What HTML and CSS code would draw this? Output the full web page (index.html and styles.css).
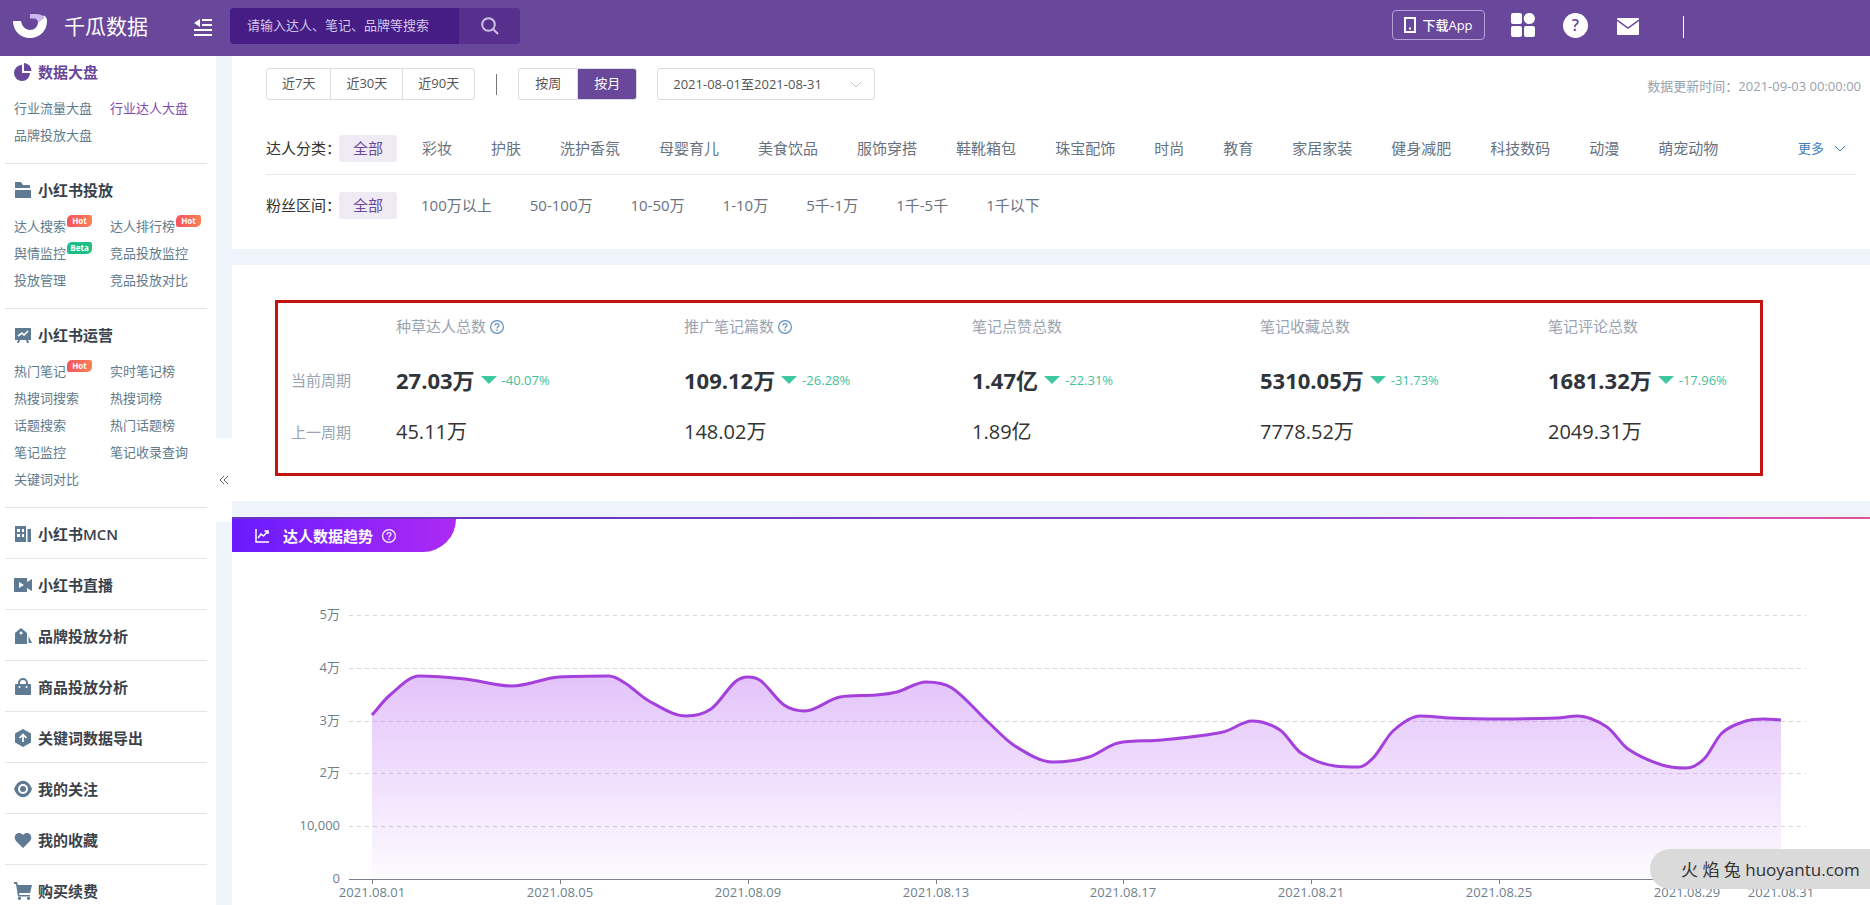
FILE: index.html
```html
<!DOCTYPE html>
<html lang="zh-CN">
<head>
<meta charset="utf-8">
<title>千瓜数据</title>
<meta name="viewport" content="width=device-width, initial-scale=1">
<link rel="stylesheet" href="styles.css">
</head>
<body>
<header class="topbar">
  <svg class="logo" viewBox="0 0 34 24" aria-hidden="true"><path fill="#fff" d="M0 7h8c1 5.500 4.500 9 9 9 4.600 0 8-3.500 8-8 0-1-.2-2-.6-3l6.600-3.500C33 2.500 34 4.500 34 7c0 10-7.500 17-17 17S0 17 0 7z"/><path fill="#cbb8ea" d="M17 0h6c4 0 7 1.200 9 3.500L25 9c0-3-1.500-4.500-4-4.500h-4z"/></svg>
  <span class="brand">千瓜数据</span>
  <button class="menu-btn" aria-label="收起菜单"><svg viewBox="0 0 18 17"><path fill="#fff" d="M6 0v8L0 4zM8 0h10v2H8zM8 5h10v2H8zM0 10h18v2H0zM0 15h18v2H0z"/></svg></button>
  <form class="search">
    <input class="search-input" type="text" aria-label="搜索" placeholder="请输入达人、笔记、品牌等搜索">
    <button class="search-btn" type="button" aria-label="搜索"><svg viewBox="0 0 18 18" fill="none" stroke="#cfc0e6" stroke-width="2"><circle cx="7.500" cy="7.500" r="6.300"/><path d="M12 12l5 5"/></svg></button>
  </form>
  <nav class="top-actions">
    <button class="download"><svg viewBox="0 0 12 16"><path fill="#fff" fill-rule="evenodd" d="M0 0h12v16H0zM2 2v12h8V2zM5 10.500h2v2H5z"/></svg>下载App</button>
    <a class="top-icon icon-grid" href="#" aria-label="应用"><svg viewBox="0 0 24 24" fill="#fff"><rect width="11" height="11" rx="2"/><circle cx="18.300" cy="5.500" r="5.600"/><rect y="13" width="11" height="11" rx="2"/><rect x="13" y="13" width="11" height="11" rx="2"/></svg></a>
    <a class="top-icon icon-help" href="#" aria-label="帮助">?</a>
    <a class="top-icon icon-mail" href="#" aria-label="消息"><svg viewBox="0 0 22 17"><rect width="22" height="17" rx="1" fill="#fff"/><path d="M0 2l11 8 11-8" fill="none" stroke="#69479b" stroke-width="1.500"/></svg></a>
    <span class="top-divider"></span>
  </nav>
</header>
<div class="page">
  <aside class="sidebar">
    <section class="group first">
      <h2 class="group-title active"><svg viewBox="0 0 18 18"><path fill="#69479b" d="M8 2v8h8a8 8 0 1 1-8-8z"/><path fill="#69479b" d="M10 0a8 8 0 0 1 7.500 8H10z"/></svg>数据大盘</h2>
      <div class="links"><a href="#">行业流量大盘</a><a class="current" href="#">行业达人大盘</a><a href="#">品牌投放大盘</a></div>
    </section>
    <section class="group">
      <h2 class="group-title"><svg viewBox="0 0 18 18"><path d="M1 1h6l2 3h7v3H1zM1 9h16v8H1z"/></svg>小红书投放</h2>
      <div class="links"><a href="#">达人搜索<sup class="badge">Hot</sup></a><a href="#">达人排行榜<sup class="badge">Hot</sup></a><a href="#">舆情监控<sup class="badge beta">Beta</sup></a><a href="#">竞品投放监控</a><a href="#">投放管理</a><a href="#">竞品投放对比</a></div>
    </section>
    <section class="group">
      <h2 class="group-title"><svg viewBox="0 0 18 18"><path d="M1 2h16v12h-3l1 3h-2l-1-3H6l-1 3H3l1-3H1z"/><path d="M4 10l4-3 2 2 4-4" fill="none" stroke="#fff" stroke-width="1.600"/></svg>小红书运营</h2>
      <div class="links"><a href="#">热门笔记<sup class="badge">Hot</sup></a><a href="#">实时笔记榜</a><a href="#">热搜词搜索</a><a href="#">热搜词榜</a><a href="#">话题搜索</a><a href="#">热门话题榜</a><a href="#">笔记监控</a><a href="#">笔记收录查询</a><a href="#">关键词对比</a></div>
    </section>
    <section class="group"><h2 class="group-title"><svg viewBox="0 0 18 18"><path fill-rule="evenodd" d="M1 1h11v16H1zM3 4v3h3V4zM8 4v3h2V4zM3 9v3h3V9zM8 9v3h2V9zM13.500 4H17v13h-3.500z"/></svg>小红书MCN</h2></section>
    <section class="group"><h2 class="group-title"><svg viewBox="0 0 18 18"><path fill-rule="evenodd" d="M0 2h13v4l5-3v12l-5-3v4H0zM5 6v6l5-3z"/></svg>小红书直播</h2></section>
    <section class="group"><h2 class="group-title"><svg viewBox="0 0 18 18"><path fill-rule="evenodd" d="M7 1l6 5v11H1V6zM7 4.500a1.500 1.500 0 1 0 .1 0zM14.500 9L18 16h-3.500z"/></svg>品牌投放分析</h2></section>
    <section class="group"><h2 class="group-title"><svg viewBox="0 0 18 18"><path d="M5 7V5a4 4 0 0 1 8 0v2" fill="none" stroke="#5f7a93" stroke-width="2"/><rect x="1" y="6" width="16" height="11" rx="1"/><circle cx="5.500" cy="9" r="1" fill="#fff"/><circle cx="12.500" cy="9" r="1" fill="#fff"/></svg>商品投放分析</h2></section>
    <section class="group"><h2 class="group-title"><svg viewBox="0 0 18 18"><path d="M9 0l8 4.500v9L9 18l-8-4.500v-9z"/><path d="M9 13V6M5.500 9L9 5.500 12.500 9" fill="none" stroke="#fff" stroke-width="1.700"/></svg>关键词数据导出</h2></section>
    <section class="group"><h2 class="group-title"><svg viewBox="0 0 18 18"><path d="M0 9c4-11 14-11 18 0-4 11-14 11-18 0z"/><circle cx="9" cy="9" r="4" fill="none" stroke="#fff" stroke-width="2"/></svg>我的关注</h2></section>
    <section class="group"><h2 class="group-title"><svg viewBox="0 0 18 18"><path d="M9 17L2 10C-2 5 4-1 9 4c5-5 11 1 7 6z"/></svg>我的收藏</h2></section>
    <section class="group"><h2 class="group-title"><svg viewBox="0 0 18 18"><path d="M0 0h3l1 3h14l-2 8H5l.5 2H16v1.500H4L2 2H0z"/><circle cx="5.500" cy="16.300" r="1.600"/><circle cx="14.500" cy="16.300" r="1.600"/></svg>购买续费</h2></section>
  </aside>
  <div class="gutter"><button class="collapse" aria-label="收起侧栏"><svg viewBox="0 0 10 10"><path d="M5 1L1 5l4 4M9 1L5 5l4 4" fill="none" stroke="#666"/></svg></button></div>
  <main class="content">
    <section class="panel filters">
      <div class="toolbar">
        <div class="btn-group"><button>近7天</button><button>近30天</button><button>近90天</button></div>
        <span class="separator"></span>
        <div class="btn-group wide"><button>按周</button><button class="selected">按月</button></div>
        <div class="select-wrap"><select class="period" aria-label="日期范围"><option>2021-08-01至2021-08-31</option></select><svg class="chevron" viewBox="0 0 12 7"><path d="M1 1l5 5 5-5" fill="none" stroke="#c0c4cc"/></svg></div>
        <span class="updated">数据更新时间：2021-09-03 00:00:00</span>
      </div>
      <div class="filter-row lined">
        <span class="filter-label">达人分类：</span>
        <a class="on" href="#">全部</a><a href="#">彩妆</a><a href="#">护肤</a><a href="#">洗护香氛</a><a href="#">母婴育儿</a><a href="#">美食饮品</a><a href="#">服饰穿搭</a><a href="#">鞋靴箱包</a><a href="#">珠宝配饰</a><a href="#">时尚</a><a href="#">教育</a><a href="#">家居家装</a><a href="#">健身减肥</a><a href="#">科技数码</a><a href="#">动漫</a><a href="#">萌宠动物</a>
        <button class="more">更多<svg class="chevron" viewBox="0 0 12 7"><path d="M1 1l5 5 5-5" fill="none" stroke="#3c80bd"/></svg></button>
      </div>
      <div class="filter-row fans">
        <span class="filter-label">粉丝区间：</span>
        <a class="on" href="#">全部</a><a href="#">100万以上</a><a href="#">50-100万</a><a href="#">10-50万</a><a href="#">1-10万</a><a href="#">5千-1万</a><a href="#">1千-5千</a><a href="#">1千以下</a>
      </div>
    </section>
    <section class="panel stats">
      <table class="stats-table">
        <thead><tr><td></td>
          <th scope="col">种草达人总数<svg class="help" viewBox="0 0 14 14"><circle cx="7" cy="7" r="6.400"/><path d="M5 5.500C5 3 9 3 9 5.300 9 6.800 7 6.700 7 8.500M7 9.500V11"/></svg></th>
          <th scope="col">推广笔记篇数<svg class="help" viewBox="0 0 14 14"><circle cx="7" cy="7" r="6.400"/><path d="M5 5.500C5 3 9 3 9 5.300 9 6.800 7 6.700 7 8.500M7 9.500V11"/></svg></th>
          <th scope="col">笔记点赞总数</th><th scope="col">笔记收藏总数</th><th scope="col">笔记评论总数</th></tr></thead>
        <tbody>
          <tr class="now"><th scope="row">当前周期</th>
            <td><b>27.03万</b><span class="drop">-40.07%</span></td>
            <td><b>109.12万</b><span class="drop">-26.28%</span></td>
            <td><b>1.47亿</b><span class="drop">-22.31%</span></td>
            <td><b>5310.05万</b><span class="drop">-31.73%</span></td>
            <td><b>1681.32万</b><span class="drop">-17.96%</span></td></tr>
          <tr class="before"><th scope="row">上一周期</th><td>45.11万</td><td>148.02万</td><td>1.89亿</td><td>7778.52万</td><td>2049.31万</td></tr>
        </tbody>
      </table>
      <div class="highlight"></div>
    </section>
    <section class="panel trend">
      <div class="trend-line"></div>
      <h3 class="trend-title"><svg class="trend-icon" viewBox="0 0 14 14"><path d="M1 0v13h13M3 9l3-4 2.500 2L13 2M9.500 2H13v3" fill="none" stroke="#fff" stroke-width="1.500"/></svg>达人数据趋势<svg class="help light" viewBox="0 0 14 14"><circle cx="7" cy="7" r="6.400"/><path d="M5 5.500C5 3 9 3 9 5.300 9 6.800 7 6.700 7 8.500M7 9.500V11"/></svg></h3>
      <svg class="chart" id="chart" viewBox="232 553 1638 360" role="img" aria-label="达人数据趋势">
        <defs><linearGradient id="fill" x1="0" y1="0" x2="0" y2="1"><stop offset="0" stop-color="#a845f0" stop-opacity=".32"/><stop offset="1" stop-color="#a845f0" stop-opacity=".02"/></linearGradient></defs>
      </svg>
    </section>
  </main>
</div>
<div class="watermark">火 焰 兔 huoyantu.com</div>
<script src="chart.js"></script>
</body>
</html>
```
FILE: styles.css
```css
* { box-sizing: border-box; }
body {
  margin: 0;
  height: 100vh;
  overflow: hidden;
  display: flex;
  flex-direction: column;
  font: 13px/20px "Open Sans", "Noto Sans CJK SC", sans-serif;
  color: #333;
  background: #eef4fa;
}
a { color: inherit; text-decoration: none; }
button, input, select { font: inherit; color: inherit; }
button { border: 0; background: none; padding: 0; cursor: pointer; }
svg { display: block; flex: none; }

.topbar {
  flex: none;
  height: 56px;
  background: #69479b;
  color: #fff;
  display: flex;
  align-items: flex-start;
  padding: 8px 0 0 13px;
}
.logo { width: 34px; height: 24px; margin-top: 6px; }
.brand { font-size: 21px; line-height: 36px; margin-left: 17px; white-space: nowrap; }
.menu-btn { margin: 11px 0 0 46px; }
.menu-btn svg { width: 18px; height: 17px; }
.search { display: flex; width: 290px; height: 36px; margin-left: 18px; border-radius: 4px; overflow: hidden; background: #56308c; }
.search-input { width: 229px; border: 0; padding: 0 17px 2px; background: #461d85; color: #fff; outline: 0; }
.search-input::placeholder { color: #d3c6e8; opacity: 1; }
.search-btn { flex: 1; display: flex; align-items: center; justify-content: center; }
.search-btn svg { width: 18px; height: 18px; }
.top-actions { margin-left: auto; display: flex; align-items: center; height: 34px; padding-right: 186px; }
.download { display: flex; align-items: center; justify-content: center; gap: 6px; width: 93px; height: 30px; border: 1px solid #b49fd6; border-radius: 4px; font-weight: 500; }
.download svg { width: 12px; height: 16px; }
.icon-grid { margin-left: 26px; }
.icon-grid svg { width: 24px; height: 24px; }
.icon-help { margin-left: 28px; width: 25px; height: 25px; border-radius: 50%; background: #fff; color: #69479b; font-size: 16px; font-weight: 600; line-height: 25px; text-align: center; }
.icon-mail { margin: 2px 0 0 29px; }
.icon-mail svg { width: 22px; height: 17px; }
.top-divider { width: 1px; height: 22px; margin: 4px 0 0 44px; background: #fff; }

.page { flex: 1; min-height: 0; display: flex; }
.sidebar { flex: none; width: 216px; background: #fff; overflow: hidden; padding: 0 9px 0 5px; }
.group { padding: 16px 0 14px 9px; border-bottom: 1px solid #e2e5e9; }
.group.first { padding-top: 6px; }
.group-title { display: flex; align-items: center; gap: 6px; margin: 0; font-size: 15px; line-height: 20px; font-weight: 600; color: #3a424b; }
.group-title svg { width: 18px; height: 18px; fill: #5f7a93; }
.group-title.active { color: #69479b; }
.links { display: grid; grid-template-columns: 96px 1fr; grid-auto-rows: 27px; line-height: 27px; padding-top: 13px; color: #5f7a8c; white-space: nowrap; }
.links a { display: flex; align-items: flex-start; }
.links .current { color: #7f4bae; }
.badge { margin: 2px 0 0 1px; width: 25px; height: 12px; border-radius: 5px 2px 5px 2px; background: linear-gradient(90deg, #f5535f, #fa8155); color: #fff; font-size: 8px; line-height: 12px; font-weight: 700; text-align: center; }
.badge.beta { background: #1cbf86; }

.gutter { flex: none; width: 16px; padding-top: 382px; }
.collapse { display: flex; align-items: center; justify-content: center; width: 16px; height: 84px; background: #fff; }
.collapse svg { width: 10px; height: 10px; }

.content { flex: 1; min-width: 0; display: flex; flex-direction: column; gap: 16px; }
.panel { background: #fff; }
.filters { padding: 12px 14px 30px 34px; }
.toolbar { display: flex; align-items: center; height: 32px; color: #555; }
.btn-group { display: flex; border: 1px solid #d9dce2; border-radius: 3px; overflow: hidden; }
.btn-group button { height: 30px; padding: 0 15px 2px; }
.btn-group.wide button { padding: 0 16px 2px; }
.btn-group button + button { border-left: 1px solid #d9dce2; }
.btn-group .selected { background: #69479b; color: #fff; }
.separator { width: 1px; height: 21px; margin: 0 21px; background: #777; }
.select-wrap { display: flex; align-items: center; width: 218px; height: 32px; margin-left: 20px; border: 1px solid #d9dce2; border-radius: 3px; padding-right: 12px; }
.period { appearance: none; flex: 1; height: 30px; border: 0; padding: 0 0 0 15px; background: none; }
.chevron { width: 12px; height: 7px; }
.updated { margin: 4px -5px 0 auto; color: #98a1ad; white-space: nowrap; }
.filter-row { display: flex; align-items: center; height: 27px; margin-top: 17px; font-size: 15px; line-height: 27px; color: #66727f; white-space: nowrap; }
.filter-row.lined { height: 40px; margin-top: 35px; padding-bottom: 12px; border-bottom: 1px solid #e9ecef; }
.filter-label { width: 73px; color: #333; }
.filter-row a { padding: 0 14px; margin-right: 11px; border-radius: 3px; }
.filter-row.fans a { margin-right: 10px; }
.filter-row .on { background: #efebf5; color: #69479b; }
.more { display: flex; align-items: center; gap: 10px; margin: 0 10px 0 auto; font-size: 13px; color: #3c80bd; }

.stats { position: relative; padding: 46px 34px 56px 59px; }
.stats-table { width: 100%; border-collapse: collapse; table-layout: fixed; }
.stats-table th, .stats-table td { padding: 0; text-align: left; white-space: nowrap; }
.stats-table th { font-size: 15px; font-weight: 400; color: #98a4b3; }
.stats-table tr > :first-child { width: 105px; }
.stats-table thead tr { height: 30px; }
.now { height: 78px; }
.before { height: 26px; }
.now b { font-size: 22px; line-height: 24px; color: #2f353b; vertical-align: middle; }
.before td { font-size: 20px; color: #333; }
.drop { color: #3fbf9a; display: inline-flex; align-items: center; margin-left: 6px; gap: 5px; vertical-align: middle; }
.drop::before { content: ""; border: 8px solid transparent; border-top-color: #3ec8a2; border-bottom: 0; }
.help { display: inline-block; width: 14px; height: 14px; margin-left: 4px; vertical-align: -2px; fill: none; stroke: #5b8fc0; stroke-width: 1.2; }
.help.light { stroke: #fff; }
.highlight { position: absolute; left: 43px; right: 107px; top: 35px; bottom: 25px; border: 3px solid #c4140f; pointer-events: none; }

.trend { flex: 1; min-height: 0; overflow: hidden; }
.trend-line { height: 2px; background: linear-gradient(90deg, #6a35c0 20%, #8245cc 65%, #cf42cf 85%, #e0559c); }
.trend-title { display: flex; align-items: center; width: 224px; height: 33px; margin: 0; padding-left: 23px; border-bottom-right-radius: 33px; background: linear-gradient(90deg, #681bff, #ad2af3); color: #fff; font-size: 15px; }
.trend-icon { width: 14px; height: 14px; margin-right: 14px; }
.trend-title .help { margin-left: 9px; }
.chart { width: 100%; height: auto; }
.chart text { font-size: 13px; fill: #6d7f8d; }

.watermark { position: absolute; right: 0; bottom: 16px; width: 220px; height: 40px; padding-left: 31px; border-radius: 20px 0 0 20px; background: #dadada; color: #333; font-size: 17px; line-height: 42px; white-space: nowrap; }
```
FILE: chart.js
```js
const chart = document.getElementById('chart');
const NS = 'http://www.w3.org/2000/svg';

function add(name, attrs, text) {
  const el = document.createElementNS(NS, name);
  for (const key in attrs) el.setAttribute(key, attrs[key]);
  if (text) el.textContent = text;
  chart.appendChild(el);
}

const points = [
  [372, 716], [390, 696], [419, 677], [465, 680], [512, 687], [559, 678], [609, 677], [625, 684],
  [649, 702], [686, 717], [711, 710], [735, 683], [748, 678], [761, 682], [784, 706], [805, 712], [840, 698],
  [876, 696], [897, 693], [926, 683], [952, 689], [988, 723], [1015, 747], [1053, 763], [1089, 758],
  [1118, 744], [1162, 741], [1223, 733], [1252, 722], [1280, 731], [1301, 754], [1335, 767], [1359, 768],
  [1374, 758], [1393, 732], [1420, 717], [1450, 719], [1500, 720], [1557, 719], [1578, 717], [1607, 728],
  [1628, 750], [1662, 766], [1686, 769], [1704, 760], [1722, 734], [1746, 722], [1764, 720], [1781, 721]
];

// Monotone cubic: tangents vanish at every local peak and trough.
const slopes = points.slice(1).map((p, i) => (p[1] - points[i][1]) / (p[0] - points[i][0]));
const tangents = points.map((p, i) => {
  if (i === 0) return slopes[0];
  if (i === points.length - 1) return slopes[i - 1];
  const a = slopes[i - 1], b = slopes[i];
  if (a * b <= 0) return 0;
  const mean = (points[i + 1][1] - points[i - 1][1]) / (points[i + 1][0] - points[i - 1][0]);
  const limit = 3 * Math.min(Math.abs(a), Math.abs(b));
  return Math.sign(mean) * Math.min(Math.abs(mean), limit);
});
let line = 'M' + points[0];
for (let i = 1; i < points.length; i++) {
  const [x0, y0] = points[i - 1], [x1, y1] = points[i];
  const h = (x1 - x0) / 3;
  line += `C${x0 + h},${y0 + h * tangents[i - 1]} ${x1 - h},${y1 - h * tangents[i]} ${x1},${y1}`;
}

['5万', '4万', '3万', '2万', '10,000', '0'].forEach((label, i) => {
  const y = Math.round(617 + i * 52.8);
  if (i < 5) add('path', { d: `M349 ${y - 0.5}H1806`, stroke: '#d6d6da', 'stroke-dasharray': '4 4' });
  add('text', { x: 340, y: y + 3, 'text-anchor': 'end' }, label);
});
add('path', { d: line + 'L1781,880L372,880Z', fill: 'url(#fill)' });
add('path', { d: line, fill: 'none', stroke: '#a440dc', 'stroke-width': 3 });
add('path', { d: 'M349 880.5H1806', stroke: '#7c8390' });

[1, 5, 9, 13, 17, 21, 25, 29, 31].forEach(day => {
  const x = Math.round(372 + (day - 1) * 46.96);
  add('path', { d: `M${x + 0.5} 880V885`, stroke: '#7c8390' });
  add('text', { x, y: 898, 'text-anchor': 'middle' }, '2021.08.' + String(day).padStart(2, '0'));
});
```
